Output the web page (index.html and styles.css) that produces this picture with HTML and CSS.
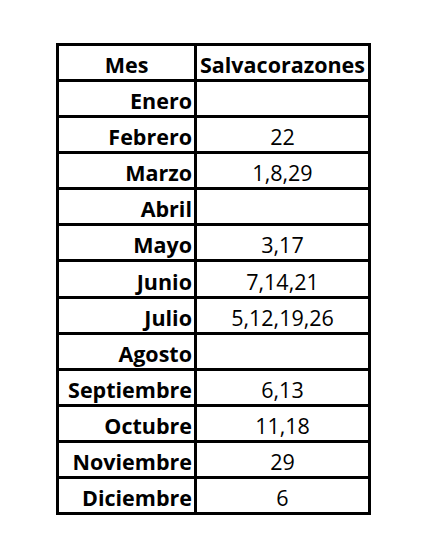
FILE: index.html
```html
<!DOCTYPE html>
<html lang="es">
<head>
<meta charset="utf-8">
<link rel="stylesheet" href="styles.css">
</head>
<body>
<div class="sheet">
  <div class="table">
    <div class="cell head">Mes</div><div class="cell head">Salvacorazones</div>
    <div class="cell mes">Enero</div><div class="cell val"></div>
    <div class="cell mes">Febrero</div><div class="cell val">22</div>
    <div class="cell mes">Marzo</div><div class="cell val">1,8,29</div>
    <div class="cell mes">Abril</div><div class="cell val"></div>
    <div class="cell mes">Mayo</div><div class="cell val">3,17</div>
    <div class="cell mes">Junio</div><div class="cell val">7,14,21</div>
    <div class="cell mes">Julio</div><div class="cell val">5,12,19,26</div>
    <div class="cell mes">Agosto</div><div class="cell val"></div>
    <div class="cell mes">Septiembre</div><div class="cell val">6,13</div>
    <div class="cell mes">Octubre</div><div class="cell val">11,18</div>
    <div class="cell mes">Noviembre</div><div class="cell val">29</div>
    <div class="cell mes">Diciembre</div><div class="cell val">6</div>
  </div>
</div>
</body>
</html>
```
FILE: styles.css
```css
html, body {
  margin: 0;
  padding: 0;
  background: #ffffff;
}
.sheet {
  padding: 43px 0 0 56px;
}
.table {
  display: grid;
  grid-template-columns: 135px 171px;
  grid-template-rows: repeat(13, 33.08px);
  gap: 3px;
  padding: 3px;
  width: max-content;
  background: #000000;
  font-family: "Open Sans", "DejaVu Sans", sans-serif;
  font-size: 21.5px;
  color: #000000;
}
.cell {
  background: #ffffff;
  display: flex;
  align-items: flex-end;
  padding: 0 2px 0 2px;
  line-height: 28px;
  white-space: nowrap;
}
.head {
  font-weight: 700;
  justify-content: center;
}
.mes {
  font-weight: 700;
  justify-content: flex-end;
}
.val {
  justify-content: center;
}
```
